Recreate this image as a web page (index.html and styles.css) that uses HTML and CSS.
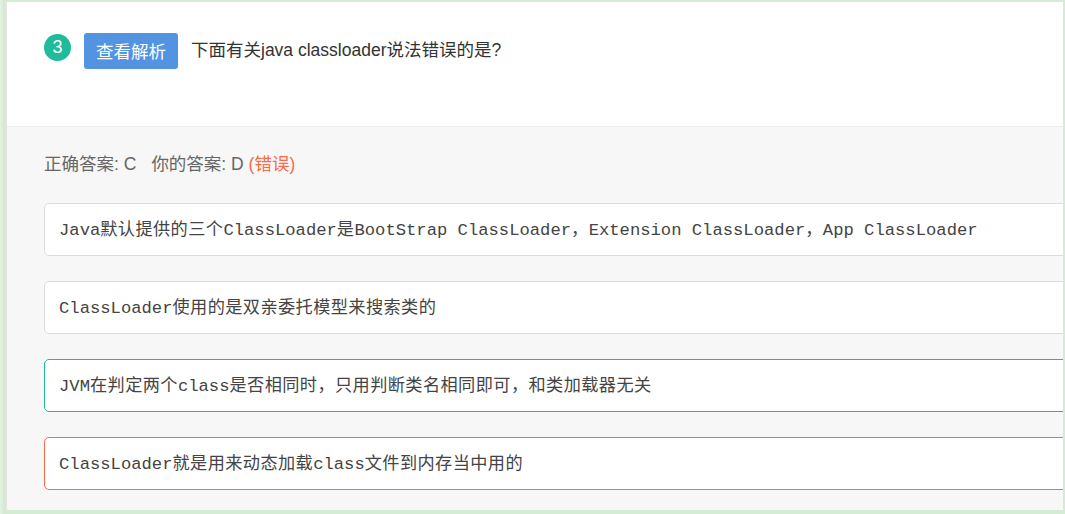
FILE: index.html
```html
<!DOCTYPE html>
<html lang="zh-CN">
<head>
<meta charset="utf-8">
<title>题目解析</title>
<link rel="stylesheet" href="styles.css">
</head>
<body>
<div class="frame">
  <div class="card">
    <div class="question">
      <span class="num">3</span>
      <button class="btn">查看解析</button>
      <p class="title">下面有关java classloader说法错误的是?</p>
    </div>
    <div class="body">
      <p class="answer">正确答案: C<span class="mine">你的答案: D <span class="wrong">(错误)</span></span></p>
      <ul class="opts">
        <li class="opt">Java<span class="zh">默认提供的三个</span>ClassLoader<span class="zh">是</span>BootStrap ClassLoader<span class="zh">，</span>Extension ClassLoader<span class="zh">，</span>App ClassLoader</li>
        <li class="opt">ClassLoader<span class="zh">使用的是双亲委托模型来搜索类的</span></li>
        <li class="opt opt-right">JVM<span class="zh">在判定两个</span>class<span class="zh">是否相同时，只用判断类名相同即可，和类加载器无关</span></li>
        <li class="opt opt-wrong">ClassLoader<span class="zh">就是用来动态加载</span>class<span class="zh">文件到内存当中用的</span></li>
      </ul>
    </div>
  </div>
</div>
</body>
</html>
```
FILE: styles.css
```css
* { box-sizing: border-box; }
html, body { margin: 0; padding: 0; }
body { background: #d4ebd4; }

.frame {
  width: 1065px;
  height: 514px;
  padding: 2px 2px 4px 5px;
  background: linear-gradient(90deg, #e4f3e4 0, #cfe8cf 5px, #d4ebd4 5px);
  overflow: hidden;
}

.card {
  height: 508px;
  border-left: 2px solid #e3e3e3;
  background: #f7f7f7;
  display: flex;
  flex-direction: column;
  overflow: hidden;
}

.question {
  height: 125px;
  flex: none;
  background: #fff;
  border-bottom: 1px solid #ececec;
  display: flex;
  align-items: flex-start;
  gap: 13px;
  padding: 31px 0 0 37px;
}

.num {
  width: 27px;
  height: 27px;
  margin-top: 1px;
  border-radius: 50%;
  background: #1fbb9b;
  color: #fff;
  font: 18px/27px "Liberation Sans", Arial, sans-serif;
  text-align: center;
}

.btn {
  height: 36px;
  padding: 0 12px;
  border: 0;
  border-radius: 3px;
  background: #5294e2;
  color: #fff;
  font: 17.5px/36px "Noto Sans CJK SC", sans-serif;
  margin: 0;
}

.title {
  margin: 0;
  color: #333;
  font: 17.5px/34px "Liberation Sans", "Noto Sans CJK SC", sans-serif;
}

.body {
  flex: 1;
  padding: 25px 0 0 37px;
}

.answer {
  margin: 0;
  color: #666;
  font: 17.5px/24px "Liberation Sans", "Noto Sans CJK SC", sans-serif;
}
.mine { margin-left: 15px; }
.wrong { color: #fa6a4b; }

.opts {
  list-style: none;
  margin: 27px -60px 0 0;
  padding: 0;
  display: flex;
  flex-direction: column;
  gap: 25px;
}

.opt {
  height: 53px;
  border: 1px solid #dcdcdc;
  border-radius: 5px;
  background: #fff;
  padding: 0 14px;
  color: #444;
  font: 17.2px/53px "Liberation Mono", "Noto Sans CJK SC", monospace;
  white-space: nowrap;
}
.zh { letter-spacing: 0.4px; }

.opt-right { border-color: #1fbb9b; }
.opt-wrong { border-color: #fa6a4b; }
```
